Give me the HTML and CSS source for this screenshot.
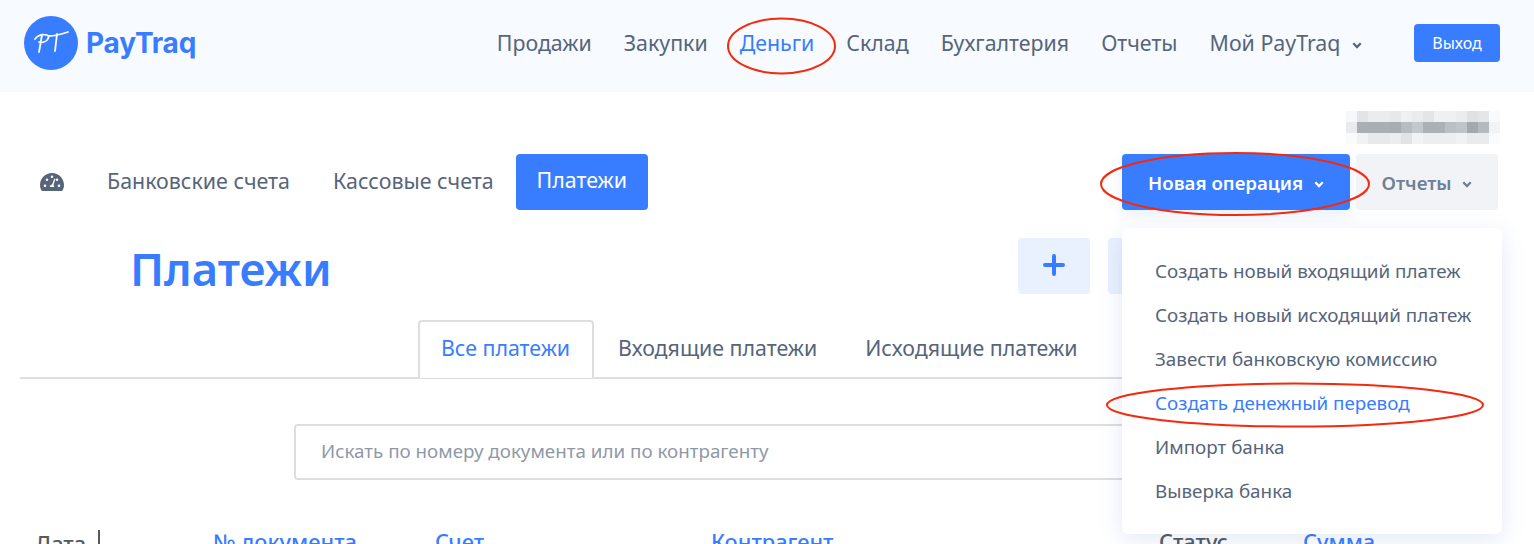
FILE: index.html
```html
<!DOCTYPE html>
<html lang="ru">
<head>
    <meta charset="UTF-8">
    <title>PayTraq - Платежи</title>
    <link rel="stylesheet" href="styles.css">
</head>
<body>
    <header class="topbar">
        <a class="logo">
            <span class="logo-mark">
                <svg width="54" height="54" viewBox="0 0 54 54">
                    <circle cx="27" cy="27" r="27" fill="#387dff"/>
                    <path d="M11 23c3-4 8-5 12-4 3 1 1 6-3 7-2 .5-3 .5-5 0M18 19l-3 17M25 20c6 0 13-2 19-4M33 18l-2 17" fill="none" stroke="#fff" stroke-width="1.800" stroke-linecap="round"/>
                </svg>
            </span>
            <span class="logo-text">PayTraq</span>
        </a>
        <nav class="mainnav">
            <a>Продажи</a>
            <a>Закупки</a>
            <a class="is-active">Деньги</a>
            <a>Склад</a>
            <a>Бухгалтерия</a>
            <a>Отчеты</a>
            <a class="has-caret">Мой PayTraq
                <svg class="caret" width="10" height="7" viewBox="0 0 10 7"><path d="M1.300 1.300 5 5l3.700-3.700" fill="none" stroke="currentColor" stroke-width="2.300"/></svg>
            </a>
        </nav>
        <button class="logout">Выход</button>
    </header>

    <div class="userline">
        <svg width="154" height="33" viewBox="0 0 154 33" shape-rendering="crispEdges">
            <g>
                <rect x="0" y="0" width="11" height="11" fill="#f6f7f9"/>
                <rect x="11" y="0" width="11" height="11" fill="#e2e4e7"/>
                <rect x="22" y="0" width="22" height="11" fill="#ebecee"/>
                <rect x="44" y="0" width="11" height="11" fill="#e6e8ea"/>
                <rect x="55" y="0" width="11" height="11" fill="#eef0f2"/>
                <rect x="66" y="0" width="11" height="11" fill="#e9ebed"/>
                <rect x="77" y="0" width="11" height="11" fill="#e3e5e8"/>
                <rect x="88" y="0" width="22" height="11" fill="#eef0f2"/>
                <rect x="110" y="0" width="11" height="11" fill="#eaecee"/>
                <rect x="121" y="0" width="11" height="11" fill="#dfe1e4"/>
                <rect x="132" y="0" width="11" height="11" fill="#e4e6e8"/>
                <rect x="143" y="0" width="11" height="11" fill="#f9fafb"/>
            </g>
            <g>
                <rect x="0" y="11" width="11" height="11" fill="#e8eaed"/>
                <rect x="11" y="11" width="33" height="11" fill="#abafb3"/>
                <rect x="44" y="11" width="11" height="11" fill="#a9adb1"/>
                <rect x="55" y="11" width="11" height="11" fill="#b7bcc1"/>
                <rect x="66" y="11" width="11" height="11" fill="#c3c8cc"/>
                <rect x="77" y="11" width="22" height="11" fill="#adb1b5"/>
                <rect x="99" y="11" width="11" height="11" fill="#bcbfc3"/>
                <rect x="110" y="11" width="11" height="11" fill="#c0c3c7"/>
                <rect x="121" y="11" width="11" height="11" fill="#a4a8ad"/>
                <rect x="132" y="11" width="11" height="11" fill="#b6b9bd"/>
                <rect x="143" y="11" width="11" height="11" fill="#f2f3f5"/>
            </g>
            <g>
                <rect x="0" y="22" width="11" height="11" fill="#fafbfc"/>
                <rect x="11" y="22" width="11" height="11" fill="#f1f2f3"/>
                <rect x="22" y="22" width="22" height="11" fill="#e7e9eb"/>
                <rect x="44" y="22" width="11" height="11" fill="#ecedef"/>
                <rect x="55" y="22" width="11" height="11" fill="#e2e3e5"/>
                <rect x="66" y="22" width="11" height="11" fill="#f1f2f4"/>
                <rect x="77" y="22" width="33" height="11" fill="#eceef0"/>
                <rect x="110" y="22" width="11" height="11" fill="#f1f2f4"/>
                <rect x="121" y="22" width="22" height="11" fill="#e9ebed"/>
                <rect x="143" y="22" width="11" height="11" fill="#fafbfc"/>
            </g>
        </svg>
    </div>

    <div class="subbar">
        <nav class="subnav">
            <a class="dash-icon">
                <svg width="24" height="20" viewBox="0 0 24 20">
                    <path fill="#56657a" fill-rule="evenodd" d="M12 1C5.400 1 0 6.400 0 13c0 2 .5 3.800 1.300 5.300.2.400.6.700 1 .7h19.400c.4 0 .8-.3 1-.7.8-1.500 1.300-3.300 1.300-5.300 0-6.600-5.400-12-12-12zM12 3.500a1.300 1.300 0 1 1 0 2.600 1.300 1.300 0 0 1 0-2.600zM5 12.500a1.300 1.300 0 1 1 0 2.600 1.300 1.300 0 0 1 0-2.600zM7 6.500a1.300 1.300 0 1 1 0 2.600 1.300 1.300 0 0 1 0-2.600zM19 12.500a1.300 1.300 0 1 1 0 2.600 1.300 1.300 0 0 1 0-2.600zM17 6.500a1.300 1.300 0 1 1 0 2.600 1.300 1.300 0 0 1 0-2.600zM14.300 6.500l1 .4-1.800 6.300c.5.500.7 1.100.7 1.800H9.800c0-1.300 1-2.400 2.300-2.500z"/>
                </svg>
            </a>
            <a>Банковские счета</a>
            <a>Кассовые счета</a>
            <a class="is-current">Платежи</a>
        </nav>
        <div class="subactions">
            <button class="btn-primary">Новая операция
                <svg class="caret" width="10" height="7" viewBox="0 0 10 7"><path d="M1.300 1.300 5 5l3.700-3.700" fill="none" stroke="currentColor" stroke-width="2.300"/></svg>
            </button>
            <button class="btn-grey">Отчеты
                <svg class="caret" width="10" height="7" viewBox="0 0 10 7"><path d="M1.300 1.300 5 5l3.700-3.700" fill="none" stroke="currentColor" stroke-width="2.300"/></svg>
            </button>
        </div>
    </div>

    <div class="titlerow">
        <h1>Платежи</h1>
        <div class="titleactions">
            <button class="btn-soft">
                <svg width="22" height="22" viewBox="0 0 22 22"><path d="M11 2v18M2 11h18" stroke="#387dff" stroke-width="4" stroke-linecap="round"/></svg>
            </button>
            <button class="btn-soft"></button>
        </div>
    </div>

    <div class="tabs">
        <a class="tab is-open">Все платежи</a>
        <a class="tab">Входящие платежи</a>
        <a class="tab">Исходящие платежи</a>
    </div>

    <div class="searchrow">
        <div class="search">Искать по номеру документа или по контрагенту</div>
    </div>

    <div class="tablehead">
        <span class="col-date">Дата <i class="sort-bar"></i></span>
        <span class="col-doc">№ документа</span>
        <span class="col-acc">Счет</span>
        <span class="col-party">Контрагент</span>
        <span class="col-status">Статус</span>
        <span class="col-sum">Сумма</span>
    </div>

    <ul class="dropdown">
        <li>Создать новый входящий платеж</li>
        <li>Создать новый исходящий платеж</li>
        <li>Завести банковскую комиссию</li>
        <li class="is-hover">Создать денежный перевод</li>
        <li>Импорт банка</li>
        <li>Выверка банка</li>
    </ul>

    <!-- red marks drawn over the screenshot -->
    <svg class="marks" width="1534" height="544" viewBox="0 0 1534 544">
        <g fill="none" stroke="#f5290c" stroke-width="2">
            <ellipse cx="781.500" cy="46" rx="53.500" ry="27.500"/>
            <ellipse cx="1235" cy="184" rx="134" ry="31"/>
            <ellipse cx="1295" cy="405" rx="188" ry="21.500"/>
        </g>
    </svg>
</body>
</html>
```

FILE: styles.css
```css
* {
    box-sizing: border-box;
}
html, body {
    height: 544px;
    overflow: hidden;
}
body {
    margin: 0;
    position: relative;
    background: #fff;
    color: #56657a;
    font-family: "Noto Sans", "Open Sans", sans-serif;
    font-size: 21.350px;
}
button {
    font-family: inherit;
    border: 0;
    cursor: pointer;
}

/* top bar */
.topbar {
    height: 92px;
    background: #f7faff;
    display: flex;
    align-items: center;
    padding: 0 34px 6px 24px;
}
.logo {
    display: flex;
    align-items: center;
    gap: 8px;
    margin-right: auto;
}
.logo-mark {
    display: flex;
}
.logo-text {
    color: #387dff;
    font-family: "Inter", sans-serif;
    font-size: 28px;
    font-weight: 700;
    letter-spacing: -0.2px;
    line-height: 28px;
}
.mainnav {
    display: flex;
    gap: 32px;
    line-height: 28px;
}
.mainnav .is-active {
    color: #387dff;
}
.caret {
    margin-left: 6px;
    vertical-align: 2px;
}
.logout {
    width: 86px;
    height: 38px;
    margin-left: 52px;
    background: #387dff;
    color: #fff;
    font-size: 16px;
    border-radius: 4px;
}

/* user name, blurred out in the source */
.userline {
    height: 62px;
    padding: 19px 34px 0 0;
    display: flex;
    justify-content: flex-end;
}

/* second level nav */
.subbar {
    height: 56px;
    display: flex;
    justify-content: space-between;
    padding: 0 36px 0 40px;
}
.subnav {
    display: flex;
    align-items: center;
    font-size: 21.400px;
}
.subnav a {
    margin-right: 43px;
    padding-bottom: 4px;
}
.subnav .dash-icon {
    display: flex;
    padding-bottom: 0;
}
.subnav .is-current {
    margin: 0 0 0 -21px;
    padding: 0 21px;
    height: 56px;
    line-height: 52px;
    background: #387dff;
    color: #fff;
    border-radius: 4px;
}
.subactions {
    display: flex;
    gap: 6px;
}
.btn-primary {
    width: 228px;
    background: #387dff;
    color: #fff;
    font-size: 18.700px;
    font-weight: 600;
    border-radius: 4px;
    box-shadow: 0 4px 14px rgba(56, 125, 255, 0.12);
}
.btn-grey {
    width: 142px;
    background: #f1f3f6;
    color: #6e7f96;
    font-size: 18.700px;
    font-weight: 600;
    border-radius: 4px;
}

/* page title */
.titlerow {
    height: 84px;
    padding: 28px 354px 0 130px;
    display: flex;
    justify-content: space-between;
}
.titlerow h1 {
    margin: 0;
    color: #387dff;
    font-size: 45.400px;
    font-weight: 600;
    line-height: 60px;
}
.titleactions {
    display: flex;
    gap: 18px;
}
.btn-soft {
    width: 72px;
    height: 56px;
    background: #e9f1ff;
    border-radius: 4px;
    display: flex;
    align-items: center;
    justify-content: center;
    padding: 0 0 2px;
}

/* tabs */
.tabs {
    margin: 26px 40px 0 20px;
    height: 59px;
    padding-left: 398px;
    display: flex;
    border-bottom: 2px solid #dcdee0;
}
.tab {
    height: 57px;
    line-height: 55px;
    padding: 0 24px;
}
.tab.is-open {
    height: 58px;
    padding: 0 21px;
    width: 176px;
    line-height: 51px;
    color: #387dff;
    background: #fff;
    border: 2px solid #dcdee0;
    border-bottom: 0;
    border-radius: 4px 4px 0 0;
}

/* search */
.searchrow {
    margin-top: 45px;
    padding-left: 294px;
}
.search {
    width: 900px;
    height: 56px;
    border: 2px solid #dcdee0;
    border-radius: 4px;
    padding-left: 25px;
    line-height: 51px;
    font-size: 18.800px;
    color: #8f99a6;
}

/* table header, cut by the window edge */
.tablehead {
    display: grid;
    grid-template-columns: 178px 222px 276px 448px 144px 1fr;
    padding: 0 0 0 35px;
    margin-top: 50px;
    font-size: 21.800px;
    font-weight: 500;
    line-height: 24px;
    color: #387dff;
}
.col-date, .col-status {
    color: #56595f;
}
.sort-bar {
    display: inline-block;
    width: 2px;
    height: 22px;
    margin-left: 6px;
    background: #56595f;
}

/* operations menu */
.dropdown {
    position: absolute;
    top: 228px;
    left: 1122px;
    width: 380px;
    height: 306px;
    margin: 0;
    padding: 21px 0 0 33px;
    list-style: none;
    background: #fff;
    border-radius: 6px;
    box-shadow: 0 6px 24px rgba(56, 100, 180, 0.14);
    font-size: 18.820px;
}
.dropdown li {
    height: 44px;
    line-height: 44px;
    white-space: nowrap;
}
.dropdown .is-hover {
    color: #387dff;
}

.marks {
    position: absolute;
    top: 0;
    left: 0;
    pointer-events: none;
}
```
